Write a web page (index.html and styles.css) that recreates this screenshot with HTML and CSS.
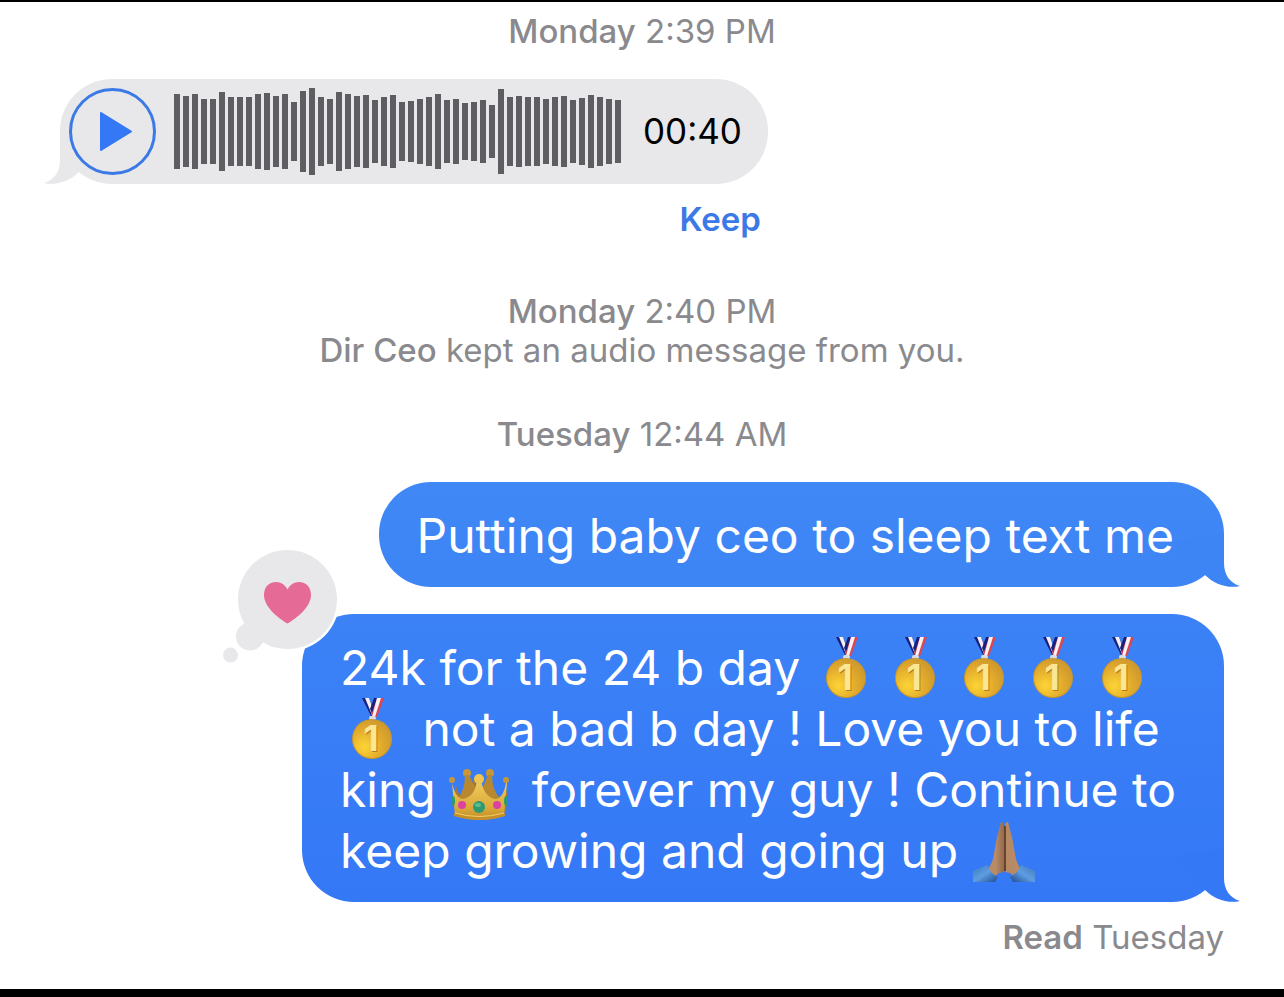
FILE: index.html
```html
<!DOCTYPE html>
<html lang="en">
<head>
	<meta charset="utf-8">
	<title>Messages</title>
	<link rel="stylesheet" href="styles.css">
</head>
<body>

	<!-- shared drawings -->
	<svg class="defs" aria-hidden="true">
		<defs>
			<radialGradient id="goldFill" cx="0.3" cy="0.7" r="0.75">
				<stop offset="0" stop-color="#fcd535"/>
				<stop offset="0.6" stop-color="#e3ab2c"/>
				<stop offset="1" stop-color="#cf9a2e"/>
			</radialGradient>
			<linearGradient id="crownFill" x1="0" y1="0" x2="0" y2="1">
				<stop offset="0" stop-color="#f0cc60"/>
				<stop offset="0.7" stop-color="#dba93a"/>
				<stop offset="1" stop-color="#c28b25"/>
			</linearGradient>
			<linearGradient id="handFill" x1="0" y1="0" x2="1" y2="0">
				<stop offset="0" stop-color="#b58862"/>
				<stop offset="0.6" stop-color="#b98c66"/>
				<stop offset="1" stop-color="#94694a"/>
			</linearGradient>
			<linearGradient id="sleeveFill" x1="0" y1="0" x2="1" y2="1">
				<stop offset="0" stop-color="#3d78b8"/>
				<stop offset="0.5" stop-color="#5f9de2"/>
				<stop offset="1" stop-color="#1d4a8c"/>
			</linearGradient>
			<linearGradient id="sleeveFillRight" x1="1" y1="0" x2="0" y2="1">
				<stop offset="0" stop-color="#3d78b8"/>
				<stop offset="0.5" stop-color="#5f9de2"/>
				<stop offset="1" stop-color="#1d4a8c"/>
			</linearGradient>
		</defs>
		<symbol id="medal" viewBox="0 1 64 64">
			<path d="M22 1h7l7 18h-5z" fill="#181f7c"/>
			<path d="M25 1h4l6 17h-3z" fill="#f4f0f4"/>
			<path d="M37 1h7l-7 19h-5l-1-4z" fill="#dc4650"/>
			<path d="M34 1h3l-5 15-2-4z" fill="#181f7c"/>
			<path d="M37 1h4l-6 19h-3z" fill="#f6f2f6"/>
			<rect x="29" y="19" width="7" height="4" rx="2" fill="#d9dbe5"/>
			<circle cx="32" cy="42" r="20" fill="#c8962c"/>
			<circle cx="32" cy="42" r="19" fill="url(#goldFill)"/>
			<text x="32" y="55" class="medal-num medal-shade">1</text>
			<text x="31" y="54" class="medal-num">1</text>
		</symbol>
		<symbol id="crown" viewBox="0 -5 64 64">
			<path d="M6 18q5 20 12 20 5-4 7-26 4 18 7 20 4-2 9-20 3 22 9 26 7 0 9-20l-2 30H8z" fill="#a77929"/>
			<circle cx="18" cy="9" r="4" fill="#c6973a"/>
			<circle cx="41" cy="9" r="4" fill="#c6973a"/>
			<path d="M16 11h4l7 14-9 16-10-6q8-8 8-24z" fill="#b88831"/>
			<path d="M39 11h4q0 16 9 24l-9 6-10-16z" fill="#b88831"/>
			<path d="M3 19q4 16 11 16 12-2 14-19h4q3 17 14 19 8 0 11-16h1l-3 33q-24 8-49 0z" fill="url(#crownFill)"/>
			<circle cx="30" cy="15" r="5" fill="#efc64f"/>
			<circle cx="3" cy="16" r="3" fill="#c6973a"/>
			<circle cx="57" cy="16" r="3" fill="#c6973a"/>
			<path d="M5 49q25 8 51 0v3q-25 8-51 0z" fill="#c58f2b"/>
			<path d="M6 49q24 7 49 0" fill="none" stroke="#f1cf68" stroke-width="1"/>
			<circle cx="30" cy="43" r="6" fill="#2f9a72"/>
			<ellipse cx="29" cy="41" rx="3" ry="2" fill="#5dbb92"/>
			<circle cx="13" cy="41" r="4" fill="#dc42a2"/>
			<circle cx="48" cy="41" r="4" fill="#dc42a2"/>
			<ellipse cx="4" cy="37" rx="2" ry="5" fill="#2f9a72"/>
			<ellipse cx="57" cy="37" rx="2" ry="5" fill="#2f9a72"/>
		</symbol>
		<symbol id="hands" viewBox="0 0 64 64">
			<path d="M29 2q3 0 3 4v46l-5 1-11 9-5-8q8-7 10-15l4-22z" fill="url(#handFill)"/>
			<path d="M36 2q-3 0-3 4v46l5 1 11 9 5-8q-8-7-10-15l-4-22z" fill="url(#handFill)"/>
			<path d="M33 6v45" stroke="#64452f" stroke-width="2"/>
			<path d="M1 51l14-6q3 8 11 12l-3 5H1z" fill="url(#sleeveFill)"/>
			<path d="M63 51l-14-6q-3 8-11 12l3 5h22z" fill="url(#sleeveFillRight)"/>
		</symbol>
	</svg>

	<main class="chat">
		<p class="stamp"><b>Monday</b> 2:39 PM</p>

		<div class="row received audio-row">
			<div class="bubble audio">
				<button class="play-btn" aria-label="Play audio message">
					<svg viewBox="0 0 87 87" aria-hidden="true">
						<circle cx="43.5" cy="43.5" r="42" fill="none" stroke="#3b7ae6" stroke-width="3"/>
						<path d="M32 25l30 18.5L32 62z" fill="#3478f6" stroke="#3478f6" stroke-width="2" stroke-linejoin="round"/>
					</svg>
				</button>
				<div class="wave" id="wave"></div>
				<span class="length">00:40</span>
				<svg class="tail" viewBox="0 0 68 54" aria-hidden="true"><path d="M52 0V30C52 42 58 50 68 53C56 56 42 51 33 42L0 10Z"/></svg>
			</div>
			<button class="keep-btn">Keep</button>
		</div>

		<p class="stamp"><b>Monday</b> 2:40 PM<br><b>Dir Ceo</b> kept an audio message from you.</p>

		<p class="stamp stamp-last"><b>Tuesday</b> 12:44 AM</p>

		<div class="row sent">
			<div class="bubble first">
				Putting baby ceo to sleep text me
				<svg class="tail" viewBox="0 0 68 54" aria-hidden="true"><path d="M52 0V30C52 42 58 50 68 53C56 56 42 51 33 42L0 10Z"/></svg>
			</div>
			<div class="bubble second">
				24k for the 24 b day
				<svg class="emoji"><use href="#medal"/></svg><svg class="emoji"><use href="#medal"/></svg><svg class="emoji"><use href="#medal"/></svg><svg class="emoji"><use href="#medal"/></svg><svg class="emoji"><use href="#medal"/></svg><svg class="emoji"><use href="#medal"/></svg>
				not a bad b day ! Love you to life king
				<svg class="emoji"><use href="#crown"/></svg>
				forever my guy ! Continue to keep growing and going up
				<svg class="emoji"><use href="#hands"/></svg>
				<svg class="tail" viewBox="0 0 68 54" aria-hidden="true"><path d="M52 0V30C52 42 58 50 68 53C56 56 42 51 33 42L0 10Z"/></svg>
				<svg class="reaction" viewBox="0 0 120 120" role="img" aria-label="Loved">
					<circle cx="67.5" cy="51.5" r="52" fill="#fff"/>
					<circle cx="67.5" cy="51.5" r="49.5" fill="#e8e8ea"/>
					<circle cx="30" cy="88.5" r="14" fill="#e8e8ea"/>
					<circle cx="10.5" cy="107" r="7.5" fill="#e8e8ea"/>
					<path d="M67.5 75.5C58 70 44 59 44 47C44 39 49 34 56 34C61 34 65.500 37 67.500 41.500C69.500 37 74 34 79 34C86 34 91 39 91 47C91 59 77 70 67.500 75.500Z" fill="#e66a96"/>
				</svg>
			</div>
		</div>

		<p class="receipt"><b>Read</b> Tuesday</p>
	</main>

<script>

	let _wave = document.getElementById("wave");
	let levels = [75,71,75,65,65,79,69,69,69,75,77,71,75,59,81,87,69,65,79,75,71,73,63,69,73,59,61,65,69,75,63,65,57,59,63,53,85,69,71,69,69,65,69,71,63,67,73,69,65,63];

	levels.forEach((level)=>{
		let _bar = document.createElement("span");
		_bar.style.height = level + "px";
		_wave.append(_bar);
	});

</script>
</body>
</html>
```
FILE: styles.css
```css
*{
	margin: 0;
	padding: 0;
	box-sizing: border-box;
}
html{
	background: #000;
}
body{
	font-family: Inter, "Liberation Sans", sans-serif;
	background: #000;
	padding: 2px 0 8px;
	min-height: 100vh;
	display: flex;
	flex-direction: column;
}
button{
	font: inherit;
	background: none;
	border: 0;
	cursor: pointer;
}
.defs{
	position: absolute;
	width: 0;
	height: 0;
}
.chat{
	flex: 1;
	background: #fff;
	padding: 10px 60px 0;
}
.stamp, .receipt{
	font-size: 33px;
	line-height: 39px;
	color: #8a8a8e;
}
.stamp{
	text-align: center;
}
.stamp b{
	font-weight: 500;
}
.receipt b{
	font-weight: 600;
}
.stamp + .stamp{
	margin-top: 45px;
}
.stamp-last{
	margin-bottom: 28px;
}
.row{
	display: flex;
	flex-direction: column;
}
.received{
	align-items: flex-start;
}
.sent{
	align-items: flex-end;
	gap: 27px;
}
.audio-row{
	width: fit-content;
	margin: 28px 0 53px;
}
.bubble{
	position: relative;
	border-radius: 52px;
	padding: 23px 36px 21px 38px;
	max-width: 922px;
	font-size: 48px;
	line-height: 61px;
	color: #fff;
}
.first{
	background: linear-gradient(#3f88f5, #3d84f5);
	padding-right: 50px;
}
.second{
	background: linear-gradient(#3c82f6, #3478f6);
}
.audio{
	display: flex;
	align-items: center;
	background: #e8e8ea;
	color: #000;
	padding: 9px 26px 9px 9px;
}
.play-btn{
	position: relative;
	z-index: 1;
	width: 87px;
	height: 87px;
	margin-right: 18px;
}
.play-btn svg{
	display: block;
}
.wave{
	display: flex;
	align-items: center;
	gap: 3px;
	margin-right: 22px;
}
.wave span{
	width: 6px;
	background: #5e5d61;
}
.length{
	font-size: 35px;
}
.keep-btn{
	align-self: flex-end;
	margin: 16px 7px 0 0;
	font-size: 33px;
	line-height: 39px;
	font-weight: 600;
	color: #3b7ae6;
}

/* bubble tail, drawn for the right side */
.tail{
	position: absolute;
	right: -16px;
	bottom: 0;
	width: 68px;
	height: 54px;
	fill: #3d84f5;
}
.second .tail{
	fill: #3478f6;
}
.audio .tail{
	right: auto;
	left: -16px;
	transform: scaleX(-1);
	fill: #e8e8ea;
}
.emoji{
	width: 64px;
	height: 64px;
	margin: -10px 5px -10px 0;
	vertical-align: -6px;
}
.medal-num{
	font-size: 35px;
	font-weight: 700;
	text-anchor: middle;
	fill: #fbe793;
}
.medal-shade{
	fill: #b57e1c;
}
.reaction{
	position: absolute;
	left: -82px;
	top: -66px;
	width: 120px;
	height: 120px;
}
.receipt{
	text-align: right;
	margin-top: 16px;
}
```
